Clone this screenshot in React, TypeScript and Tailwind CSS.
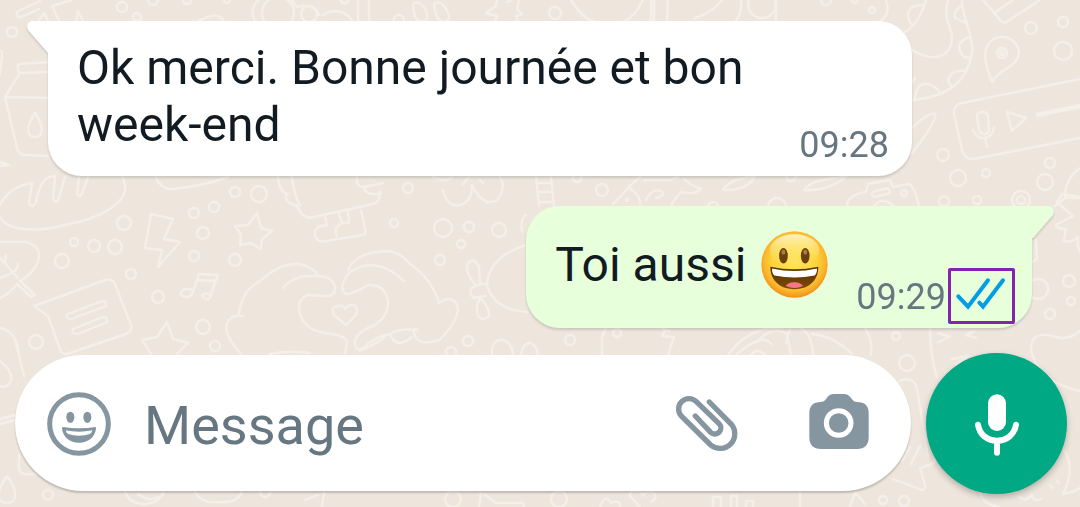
import React, { useState } from 'react';

type Message = {
  id: string;
  text: string;
  time: string;
  mine: boolean;
};

const MESSAGES: Message[] = [
  { id: 'm1', text: 'Ok merci. Bonne journée et bon week-end', time: '09:28', mine: false },
  { id: 'm2', text: 'Toi aussi', time: '09:29', mine: true },
];

// [cx, cy, r]
const DOTS: [number, number, number][] = [
  [122, 7, 5], [137, 17, 4], [12, 32, 5], [153, 0, 5], [187, 0, 4], [227, 0, 3], [278, 13, 16], [309, 14, 8],
  [399, 20, 5], [555, 13, 6], [762, 4, 14], [826, 0, 5], [855, 0, 3], [872, 10, 3],
  [1031, 28, 6], [1063, 22, 5], [1063, 51, 9], [1002, 53, 5], [943, 155, 6], [958, 178, 8], [986, 173, 4],
  [1050, 163, 5], [1045, 182, 8], [904, 193, 3], [1021, 200, 9], [1021, 200, 4], [944, 201, 5], [977, 200, 4],
  [602, 190, 6], [713, 207, 5], [777, 207, 9], [627, 200, 1], [577, 178, 4], [791, 176, 5],
  [235, 192, 5], [259, 194, 8], [214, 207, 5], [194, 213, 5], [124, 223, 7], [203, 233, 6], [115, 247, 7],
  [94, 246, 6], [74, 242, 4], [62, 261, 7], [194, 256, 5], [235, 260, 6], [131, 274, 5], [158, 297, 6],
  [203, 327, 7], [215, 346, 5], [36, 342, 7], [408, 188, 5], [394, 223, 4], [443, 228, 9], [469, 227, 5],
  [499, 230, 7], [461, 244, 4], [440, 260, 5], [1038, 289, 10], [1069, 281, 6], [1071, 301, 4], [1050, 314, 5],
  [468, 341, 5], [570, 340, 5], [451, 352, 5], [617, 333, 4], [896, 336, 4], [907, 363, 8],
  [48, 495, 5], [265, 492, 5], [453, 499, 8], [559, 499, 8], [883, 500, 4], [904, 501, 5],
];

const DOODLES = [
  // sticks and jar
  'M40 1L18 11q-4 5 3 6L39 9M37 23l7-10 5 10M52 6l8 17M52 6L72 0M76 23l2-12 6 12',
  'M48 62L20 64q-3 0-2 4l1 5 29-1M20 73L5 97l43 1M5 97l12 51q2 7 8 7l23 1M35 113c-10 15-8 24 0 24s10-9 0-24M0 51q3 0 2 4L0 74M0 162l9 3-9 1',
  // top strip
  'M197 22q22-13 27 0M256 23Q248 8 259 0M292 0q4 6 5 7 16-5 22 8M322 15q20-11 32 8M358 0v22M369 0v22',
  'M413 4q4-4 11 3 7 12-1 15-9 1-10-18M434 4q4-4 11 3 8 12 0 15-9 1-11-18M340 0q5 7 9 0',
  'M497 0l-1 6-10 7 11 3-3 6M512 0l-5 2M519 0l-2 9 5 5-6 2 2 6M571 0q12 19 24 22M643 0q-7 15-18 21M651 0v22M654 0v22M668 0l-1 22',
  'M722 0q-9 12-27 18M741 0q1 14-6 22M776 0v22',
  'M886 0q5 16-6 21M926 0q-7 24-21 32M922 5q-14 0-14 11 2 9 6 9',
  // big ring on the right
  'M948 0c-5 22 3 25 4 36 0 25-23 25-40 14M962 0c0 20 12 35 10 52-4 29-24 45-60 48M961 6q-8 5-6 12l9 4M970 37q-18 6-6 20l6 1M966 71q-15-2-18 9l4 8M915 98q2-16 13-14 10 3 11 9M912 82l3-4',
  'M983 0l18 21q3 3 7 0L1040 0M994 13L1013 0',
  'M992 82C985 65 983 50 989 43c10-12 30-5 30 10-2 15-19 15-27 29z',
  // voice note
  'M1080 79L962 103q-9 2-8 11l8 36q3 10 12 9l106-21M1007 112l19 6-14 13zM1037 116l43-9M1037 114l43-9',
  'M977 116q0-4 5-4t6 4l1 13q0 5-4 5t-6-4zM973 130q4 9 11 8 9-1 10-11M985 138l2 9',
  'M912 128q18-17 23-14 4 4-23 39M1080 168q-16 12-15 30h15M1065 198l-10 8',
  // strip between the bubbles
  'M536 177l3 29M551 177l3 29M537 183h15M538 192h14M539 202h14',
  'M613 204q10-10 18-19l9-8M628 187q14 9 12 19M644 180h26l8-3M684 179q6 6 17 10-5 6-20 3-5 5-10 13M646 200q6-12 15-9 6 4-5 7',
  'M723 190q6-11 32-14-7 15-32 14M804 190q7-11 42-13-20 15-42 13',
  'M847 206q0-11 19-14l2-8 22-4 3 7 15-3q6 0 11 22M873 192l15-4q4 5-1 6l-12 3q-5-1-2-5M874 206q8-10 20 0',
  // bread, bolt, stars
  'M0 217c8 16 44 14 65 8 35-6 63-23 60-39l-2-8M0 205q10-19 32-22l-3 20q3 7 7-1 5-27 19-26l-2 23q4 6 6-2l6-20M79 177l-2 17q4 5 6-3l5-14',
  'M156 177q5 13 17 12 30-3 55-12M278 177q2 16 10 17M292 177q2 18 8 28M286 194q-2 8 10 12',
  'M151 214l22 5-9 20 16 3-22 25 4-17-17-2z',
  'M257 213l4 15 11 3-10 8-1 10-10-6-11 2 1-11-6-8 13-1z',
  'M151 354l-9-14 15-3 10-15 6 17 15 4-11 11',
  'M193 292l6-18 19 1-8 21M197 280l19 1M181 293q2-6 12-3 0 7-7 7-6-1-5-4M202 296q3-5 9-1-1 6-6 4z',
  // leaf and chat card
  'M0 242h25q15 3 14 15-2 14-19 24l15 14-4 2-14-13Q8 295 0 298M0 258l18 20M5 263l1-8M13 272q5-3 5-8M12 273l-12 5',
  'M34 306l71-26q7-2 10 4l16 41q2 6-5 9l-59 20q-5 1-7-5l-12-33z',
  'M68 314l34-13q5 0 4 5l-35 13q-6 0-3-5M73 329l30-12q5 0 4 5l-29 12q-7 0-5-5M0 328q17 3 19 27',
  // heart made of hands
  'M241 354q-18-20-14-31 4-9 16-7M239 315q2-24 21-34 20-18 38-17 12 1 20 11M283 288q11-13 28-12 22-1 24 11 1 10-11 9l-17-1q-12 6-6 22 6 13 24 16 22 2 22 10-1 5-2 10',
  'M348 270q7-18 40-19 14 2 22 13 22 15 29 39 14-10 19 5-1 16-19 32-22 7-25-7-1-6 3-3-21-3-35 9-24 17-27 6-2-12 20-20 14-10 13-23-2-18-20-17-17 10-22 9-9-7 4-22 26-17 54 9',
  'M346 325l-12-10q-4-8 4-9 6-1 7 3 4-6 10-3 4 5 0 10zM270 354q20-4 40-1',
  // little character
  'M297 205q5 15 17 12l59-13q8-2 7-13M357 177q-1 11 7 10l19-4M363 187q4 10 18 6M325 217l2 8q-14 1-12 11 3 7 11 5l37-6q3-1 2-6l-4-19M339 214l3 9q-9 4-5 13M348 212l1 11h-7',
  'M433 177l10 3q10-1 10-5M443 190q4 18 18 15 11-4 11-20 6 13 15 17 15 2 16-19l-3-6M463 184l6-7M480 180l3 3',
  'M526 245q-37 12-39 39 5 25 40 28M476 285q-10-10-9-20 6-10 12 2l1 16M472 288q7-5 14-4M473 298l13-2M472 288q-4 7 2 9M480 298q-5 8-2 18 5 6 11 0 1-8-9-18M526 215q-6 3-4 17',
  // flower at the right edge
  'M1080 197l-18-3-5 8 16 14-17 9q0 4 10 4l-2 12q8 2 14-4-1 10 2 14M1036 240l1 19-5 3',
  // behind the composer
  'M492 355q-1-15 9-15t12 15M521 355q2-12 9-12 7 2 8 12M360 351q14-15 30-17 6 16 22 3M602 355v-18l4-9M665 330l-3 6 12 1-6 18M669 331l-7-3',
  'M728 355q22-30 55-27M737 354q26-22 34-10M751 355q6-8 14 0M757 342q16-18 30-8l4 21M790 328l-4 15M800 328q12 5 13 27M812 334q22 2 40 20M865 328q8 12 6 27',
  'M930 328q0 26 7 50M938 333l12 4-12 5M974 331l-8 4 10 3M952 359l16-3-12 8M1080 331q-12 10-24 6-26-8-25 14 9 32 49 40',
  'M899 381q15-6 18 8l11 67M893 479l29 11q4 0 3-5l-5-17 12-4q5-3 2-8M902 461l8-14M911 464l9-18',
  'M1064 450q12 18-1 44 12-2 17-6M981 494q2 10 18 13M1019 497q6 6 13-2 2 8 9 4M1050 485l3 3M1057 481l2 2',
  // bottom strip
  'M15 340l9 36M0 361q15 12 10 22-5 6-10 3M0 419l15-4M0 424l15-4M19 455v14q1 7 16 5M7 476c-12 16-10 27 0 27s12-11 0-27',
  'M125 492q5 12 20 12 15-1 18-12M138 494q12 10 26 0M195 492q7 12 22 10 20 2 25-10M305 500l13-5M324 492l-2 15M481 492l-2 15M484 494l12 9h27l1 4M600 507q5-14 11-4 10-4 9 4M640 507l-10-11q0-7 6-5 6-1 7 5 4-7 11-3 4 5-3 9M713 507v-10h8v10M731 507v-11h6v11M746 507v-6h7v6M800 492v15M850 507l5-15 10 12',
];

const Wallpaper: React.FC = () => (
  <svg
    className="absolute inset-0 h-full w-full"
    viewBox="0 0 1080 507"
    preserveAspectRatio="xMinYMin slice"
    fill="none"
    stroke="#f6eee8"
    strokeWidth="2.4"
    strokeLinecap="round"
    strokeLinejoin="round"
    aria-hidden="true"
  >
    {DOTS.map(([cx, cy, r]) => (
      <circle key={`${cx}-${cy}-${r}`} cx={cx} cy={cy} r={r} />
    ))}
    <circle cx="1002" cy="53" r="2" />
    {DOODLES.map(d => (
      <path key={d} d={d} />
    ))}
  </svg>
);

const GrinningFace: React.FC = () => (
  <svg className="h-[67px] w-[67px] shrink-0" viewBox="0 0 200 200" role="img" aria-label="😃">
    <defs>
      <radialGradient id="face" cx="0.5" cy="0.45" r="0.56">
        <stop offset="0" stopColor="#fee45a" />
        <stop offset="0.6" stopColor="#fcd43c" />
        <stop offset="0.82" stopColor="#fbb62c" />
        <stop offset="1" stopColor="#f28a1c" />
      </radialGradient>
      <linearGradient id="gloss" x1="0" y1="0" x2="0" y2="1">
        <stop offset="0" stopColor="#fff6cf" stopOpacity="0.9" />
        <stop offset="1" stopColor="#ffe45c" stopOpacity="0" />
      </linearGradient>
      <linearGradient id="mouth" x1="0" y1="0" x2="0" y2="1">
        <stop offset="0" stopColor="#5a3206" />
        <stop offset="1" stopColor="#7d4a05" />
      </linearGradient>
    </defs>
    <circle cx="100" cy="100" r="99" fill="url(#face)" />
    <ellipse cx="100" cy="58" rx="74" ry="48" fill="url(#gloss)" />
    <ellipse cx="67" cy="74" rx="13" ry="23" fill="#6b3f08" />
    <ellipse cx="132" cy="74" rx="13" ry="23" fill="#6b3f08" />
    <ellipse cx="67" cy="63" rx="6" ry="8" fill="#a57c4c" />
    <ellipse cx="132" cy="63" rx="6" ry="8" fill="#a57c4c" />
    <path d="M28 107Q100 122 171 107C172 150 140 174 100 174S27 150 28 107z" fill="url(#mouth)" />
    <path d="M33 112Q100 127 167 112Q168 126 160 133Q100 145 40 133Q32 126 33 112z" fill="#fff" />
    <path d="M74 164Q82 152 100 153T126 164Q100 176 74 164z" fill="#f5788a" />
  </svg>
);

const ReadReceipt: React.FC = () => (
  <span className="ml-0.5 block h-14 w-[67px] rounded-[2px] border-3 border-[#8324ae]">
    <svg className="h-[50px] w-[61px]" viewBox="634 244 183 150" fill="none" stroke="#029de5" strokeWidth="12" strokeLinecap="round" role="img" aria-label="Lu">
      <path d="M656 320L685 351L745 272" />
      <path d="M719 339L730 351L790 272" />
    </svg>
  </span>
);

const Tail: React.FC<{ mine: boolean }> = ({ mine }) => (
  <svg
    className={`absolute top-0 h-[33px] w-[23px] ${mine ? '-right-[22px] -scale-x-100 fill-[#e7ffdb]' : '-left-[21px] fill-white'}`}
    viewBox="0 0 23 33"
    aria-hidden="true"
  >
    <path d="M23 0H6C1 0-1 5 1 9L21 32H23z" />
  </svg>
);

const Bubble: React.FC<{ message: Message }> = ({ message }) => {
  const { text, time, mine } = message;

  if (mine) {
    return (
      <li className="relative mr-[35px] flex items-end self-end rounded-[34px] rounded-tr-none bg-[#e7ffdb] pr-[17px] pb-1 pl-[29px] drop-shadow-[0_2px_1px_rgba(0,0,0,0.14)]">
        <Tail mine />
        <p className="mt-[25px] mb-[26px] flex items-center gap-[15px] text-[48px] leading-[57px]">
          {text}
          <GrinningFace />
        </p>
        <div className="ml-7 flex items-center">
          <time className="pt-0.5 text-[36px] leading-[42px] text-[#667781]">{time}</time>
          <ReadReceipt />
        </div>
      </li>
    );
  }

  return (
    <li className="relative mr-[155px] ml-[33px] flex items-end rounded-[34px] rounded-tl-none bg-white pt-[18px] pr-[23px] pb-[10px] pl-[29px] drop-shadow-[0_2px_1px_rgba(0,0,0,0.14)]">
      <Tail mine={false} />
      <p className="mb-[13px] flex-1 text-[48px] leading-[57px]">{text}</p>
      <time className="text-[36px] leading-[42px] text-[#667781]">{time}</time>
    </li>
  );
};

const Composer: React.FC = () => {
  const [draft, setDraft] = useState('');

  return (
    <form className="mt-[25px] flex items-start gap-[15px]" onSubmit={e => e.preventDefault()}>
      <div className="mt-0.5 flex h-[136px] min-w-0 flex-1 items-center rounded-full bg-white pr-10 pl-8 text-[#8696a0] shadow-[0_2px_2px_rgba(0,0,0,0.2)]">
        <button type="button" aria-label="Emoji" className="shrink-0">
          <svg className="h-16 w-16 overflow-visible" viewBox="141 153 192 192" fill="currentColor">
            <circle cx="237" cy="252" r="88" fill="none" stroke="currentColor" strokeWidth="15" />
            <ellipse cx="211" cy="232" rx="12" ry="17" />
            <ellipse cx="262" cy="232" rx="12" ry="17" />
            <path fillRule="evenodd" d="M189 261Q237 269 286 261Q289 261 288 266C285 292 264 308 237 308S189 292 186 266Q186 261 189 261zM197 271Q198 287 237 287T277 271Q237 279 197 271z" />
          </svg>
        </button>
        <input
          type="text"
          aria-label="Message"
          placeholder="Message"
          value={draft}
          onChange={e => setDraft(e.target.value)}
          className="ml-[33px] min-w-0 flex-1 pt-[6px] text-[54px] leading-[64px] text-[#111b21] outline-none placeholder:text-[#667781]"
        />
        <button type="button" aria-label="Joindre" className="shrink-0">
          <svg className="h-16 w-16" viewBox="74 153 192 192" fill="none" stroke="currentColor" strokeWidth="16" strokeLinecap="round">
            <path d="M177 186L243 253A44 44 0 0 1 181 315L94 229A31 31 0 0 1 138 185L206 251A18 18 0 0 1 181 277L135 228" />
          </svg>
        </button>
        <button type="button" aria-label="Appareil photo" className="ml-[68px] shrink-0">
          <svg className="h-16 w-16" viewBox="470 153 192 192" fill="currentColor">
            <path d="M549 162H582Q593 162 599 170L607 180Q611 186 620 186Q655 186 655 220V292Q655 327 620 327H512Q477 327 477 292V220Q477 186 511 186Q520 186 525 180L532 170Q538 162 549 162z" />
            <circle cx="565" cy="249" r="37" fill="none" stroke="#fff" strokeWidth="15" />
          </svg>
        </button>
      </div>
      <button
        type="button"
        aria-label="Message vocal"
        className="flex h-[141px] w-[141px] shrink-0 items-center justify-center rounded-full bg-[#00a884] shadow-[0_3px_6px_rgba(0,0,0,0.25)]"
      >
        <svg className="h-16 w-16" viewBox="945 153 192 192" fill="none" stroke="#fff" strokeWidth="18" strokeLinecap="round">
          <rect x="1014" y="160" width="54" height="110" rx="27" fill="#fff" stroke="none" />
          <path d="M984 251C989 281 1011 299 1041 299S1093 281 1098 251M1041 300V335" />
        </svg>
      </button>
    </form>
  );
};

export default function App() {
  return (
    <div className="relative min-h-screen overflow-hidden bg-[#eee6dd] font-[Roboto,sans-serif] text-[#111b21]">
      <Wallpaper />
      <main className="relative flex flex-col pt-[21px] pr-[13px] pb-[13px] pl-[15px]">
        <ul className="flex flex-col gap-[30px]">
          {MESSAGES.map(m => (
            <Bubble key={m.id} message={m} />
          ))}
        </ul>
        <Composer />
      </main>
    </div>
  );
}
